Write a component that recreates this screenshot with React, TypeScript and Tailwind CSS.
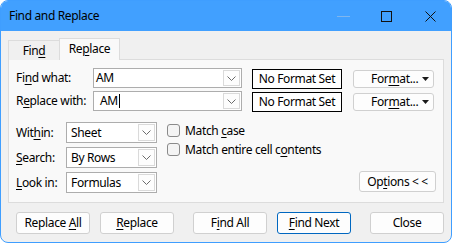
import React from "react";

const F = { fontFamily: '"Noto Sans", "Segoe UI", sans-serif' };

function U({ children }: { children: React.ReactNode }) {
  return <span className="underline underline-offset-2 decoration-1">{children}</span>;
}

function Chevron() {
  return (
    <svg width="9" height="5" viewBox="0 0 9 5" className="block">
      <polyline points="0.5,0.5 4.5,4.5 8.5,0.5" fill="none" stroke="#6b6b6b" strokeWidth="1" />
    </svg>
  );
}

function Combo({ w, h, text, pad = 4, caret = false, btnW = 17 }: { w: number; h: number; text: string; pad?: number; caret?: boolean; btnW?: number }) {
  return (
    <div className="flex border border-[#adadad] bg-white" style={{ width: w, height: h }}>
      <div className="flex-1 flex items-center text-[12px] text-black" style={{ paddingLeft: pad }}>
        <span>{text}</span>
        {caret && <span className="inline-block w-px h-[14px] bg-black ml-px" />}
      </div>
      <div
        className="flex items-center justify-center border border-[#dadada] bg-[#fdfdfd] m-px"
        style={{ width: btnW }}
      >
        <Chevron />
      </div>
    </div>
  );
}

function NoFormat() {
  return (
    <div className="w-[90px] h-[20px] border border-black bg-white flex items-center justify-center text-[12px] text-black">
      <span>No Format Set</span>
    </div>
  );
}

function FormatBtn() {
  return (
    <div className="w-[81px] h-[18px] rounded-[3px] border border-[#d0d0d0] bg-[#fdfdfd] flex items-center text-[12px] text-black">
      <span className="ml-[17px]">
        For<U>m</U>at...
      </span>
      <svg width="7" height="4" viewBox="0 0 7 4" className="ml-auto mr-[4px]">
        <polygon points="0,0 7,0 3.5,4" fill="#1a1a1a" />
      </svg>
    </div>
  );
}

function Btn({ children, primary = false, ml = 0 }: { children: React.ReactNode; primary?: boolean; ml?: number }) {
  return (
    <div
      className={
        "h-[22px] w-[74px] rounded-[3px] bg-[#fdfdfd] flex items-center justify-center text-[12px] text-black " +
        (primary ? "border border-[#0067c0] " : "border border-[#d0d0d0]")
      }
      style={{ marginLeft: ml }}
    >
      <span>{children}</span>
    </div>
  );
}

function Check({ children }: { children: React.ReactNode }) {
  return (
    <div className="flex items-center h-[13px] text-[12px] text-black">
      <div className="w-[13px] h-[13px] rounded-[3px] border border-[#8a8a8a] bg-[#f4f4f4]" />
      <span className="ml-[5px]">{children}</span>
    </div>
  );
}

export default function App() {
  return (
    <div className="w-[452px] h-[243px] bg-white tracking-[-0.35px]" style={F}>
      <div className="w-[452px] h-[243px] rounded-[8px] border border-[#3f9eff] overflow-hidden flex flex-col bg-[#f0f0f0]">
        {/* Title bar */}
        <div className="h-[30px] bg-[#41a0ff] flex items-center shrink-0">
          <span className="ml-[8px] text-[12px] text-black">Find and Replace</span>
          <div className="ml-auto flex items-center">
            <div className="w-[13px] h-px bg-[#7fb6ee] mr-[31px]" />
            <div className="w-[11px] h-[11px] border border-[#111] mr-[33px]" />
            <svg width="11" height="11" viewBox="0 0 11 11" className="mr-[15px]">
              <line x1="0.5" y1="0.5" x2="10.5" y2="10.5" stroke="#111" strokeWidth="1" />
              <line x1="10.5" y1="0.5" x2="0.5" y2="10.5" stroke="#111" strokeWidth="1" />
            </svg>
          </div>
        </div>

        {/* Tabs */}
        <div className="flex items-end mt-[7px] ml-[7px] h-[22px] relative z-10">
          <div className="w-[52px] h-[20px] border border-b-0 border-[#dcdcdc] bg-[#f0f0f0] flex items-center justify-center text-[12px] text-black">
            <span>
              Fin<U>d</U>
            </span>
          </div>
          <div className="w-[61px] h-[22px] border border-b-0 border-[#dcdcdc] bg-[#f9f9f9] flex items-center justify-center text-[12px] text-black -ml-px pb-[1px]">
            <span>
              Re<U>p</U>lace
            </span>
          </div>
        </div>

        {/* Panel */}
        <div className="mx-[7px] -mt-px h-[144px] border border-[#dcdcdc] bg-[#f9f9f9] px-[7px] pt-[8px] flex flex-col">
          <div className="flex items-center h-[20px]">
            <div className="w-[77px] text-[12px] text-black">
              Fi<U>n</U>d what:
            </div>
            <Combo w={149} h={20} text="AM" pad={2} />
            <div className="ml-[10px] mt-[2px]">
              <NoFormat />
            </div>
            <div className="ml-[11px] mt-[2px]">
              <FormatBtn />
            </div>
          </div>
          <div className="flex items-center h-[20px] mt-[3px]">
            <div className="w-[77px] text-[12px] text-black">
              R<U>e</U>place with:
            </div>
            <Combo w={149} h={20} text="AM" pad={6} caret />
            <div className="ml-[10px] mt-[2px]">
              <NoFormat />
            </div>
            <div className="ml-[11px] mt-[2px]">
              <FormatBtn />
            </div>
          </div>

          <div className="flex mt-[11px]">
            <div className="flex flex-col gap-[4px]">
              <div className="flex items-center h-[21px]">
                <div className="w-[50px] text-[12px] text-black">
                  Wit<U>h</U>in:
                </div>
                <Combo w={91} h={21} text="Sheet" pad={4} />
              </div>
              <div className="flex items-center h-[21px]">
                <div className="w-[50px] text-[12px] text-black">
                  <U>S</U>earch:
                </div>
                <Combo w={91} h={21} text="By Rows" pad={4} />
              </div>
              <div className="flex items-center h-[21px]">
                <div className="w-[50px] text-[12px] text-black">
                  <U>L</U>ook in:
                </div>
                <Combo w={91} h={21} text="Formulas" pad={4} />
              </div>
            </div>
            <div className="ml-[10px] mt-[2px] flex flex-col gap-[6px]">
              <Check>
                Match <U>c</U>ase
              </Check>
              <Check>
                Match entire cell c<U>o</U>ntents
              </Check>
            </div>
            <div className="ml-auto mt-[49px]">
              <div className="w-[77px] h-[21px] rounded-[3px] border border-[#d0d0d0] bg-[#fdfdfd] flex items-center justify-center text-[12px] text-black">
                <span>
                  Op<U>t</U>ions &lt; &lt;
                </span>
              </div>
            </div>
          </div>
        </div>

        {/* Buttons */}
        <div className="flex mt-[9px] ml-[15px]">
          <Btn>
            Replace <U>A</U>ll
          </Btn>
          <Btn ml={10}>
            <U>R</U>eplace
          </Btn>
          <Btn ml={19}>
            F<U>i</U>nd All
          </Btn>
          <Btn ml={10} primary>
            <U>F</U>ind Next
          </Btn>
          <Btn ml={19}>Close</Btn>
        </div>
      </div>
    </div>
  );
}
